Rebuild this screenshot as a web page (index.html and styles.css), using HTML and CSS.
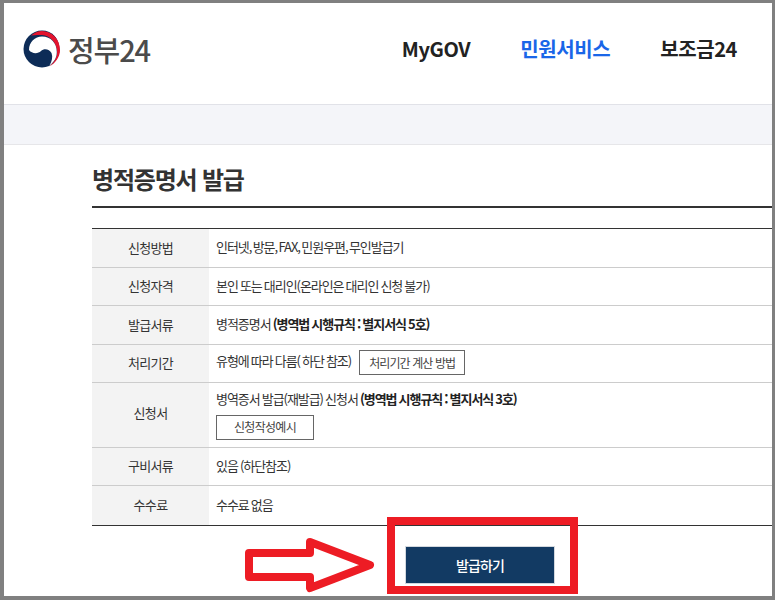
FILE: index.html
```html
<!DOCTYPE html>
<html lang="ko">
<head>
<meta charset="utf-8">
<title>병적증명서 발급</title>
<link rel="stylesheet" href="styles.css">
</head>
<body>
<div class="frame">
  <header class="top">
    <a class="logo">
      <svg class="mark" width="38" height="38" viewBox="0 0 38 38">
        <circle cx="19" cy="19" r="18.500" fill="#0d2c57"/>
        <path d="M30 4V.5H38V38H26V36.500C32 33 36.500 27 36.500 20C36.500 13 34 8 30 4Z" fill="#fff"/>
        <path d="M8 5.500C11 3 15 1 19 1C29 1 37 9.500 37 20C37 27 32.500 33 26.500 36.500C32 31.500 34.500 26 34 21C33.500 12.500 27 5.500 19 5C15 4.800 11 4.800 8 5.500Z" fill="#e3132d"/>
        <path d="M6 20C6 12 12 6.500 19 6.500C28 6.500 33.800 13 33.800 22C33.800 28 31 32 26.500 35.500C29 31 30 27 28.500 23C26.500 19 21 18 18 21C15 24 9 24 6 20Z" fill="#fff"/>
      </svg>
      <span class="logo-text">정부24</span>
    </a>
    <nav class="menu">
      <a class="menu-item">MyGOV</a>
      <a class="menu-item is-active">민원서비스</a>
      <a class="menu-item">보조금24</a>
    </nav>
  </header>
  <div class="band"></div>
  <main class="content">
    <h1 class="title">병적증명서 발급</h1>
    <table class="info">
      <tr class="r39"><th>신청방법</th><td class="tight">인터넷, 방문, FAX, 민원우편, 무인발급기</td></tr>
      <tr class="r38"><th>신청자격</th><td>본인 또는 대리인(온라인은 대리인 신청 불가)</td></tr>
      <tr class="r39"><th>발급서류</th><td>병적증명서 <b>(병역법 시행규칙 : 별지서식 5호)</b></td></tr>
      <tr class="r38"><th>처리기간</th><td>유형에 따라 다름( 하단 참조) <a class="btn btn-calc">처리기간 계산 방법</a></td></tr>
      <tr class="r65"><th class="th-tall">신청서</th><td><div class="line">병역증서 발급(재발급) 신청서 <b>(병역법 시행규칙 : 별지서식 3호)</b></div><a class="btn btn-ex">신청작성예시</a></td></tr>
      <tr class="r38"><th>구비서류</th><td>있음 (하단참조)</td></tr>
      <tr class="r39"><th>수수료</th><td>수수료 없음</td></tr>
    </table>
    <div class="actions"><a class="issue">발급하기</a></div>
  </main>
  <svg class="arrow" width="140" height="56" viewBox="0 0 140 56">
    <path d="M6 16H67V5L127 28L67 51V40H6Z" fill="#fff" stroke="#ed1c24" stroke-width="8" stroke-linejoin="round"/>
  </svg>
  <div class="mark-box"></div>
</div>
</body>
</html>
```
FILE: styles.css
```css
* { box-sizing: border-box; }
html, body { margin: 0; padding: 0; }
body {
  font-family: "Noto Sans CJK KR", "Noto Sans", sans-serif;
  color: #333;
  background: #fff;
}
.frame {
  position: relative;
  width: 775px;
  height: 600px;
  overflow: hidden;
  border-style: solid;
  border-color: #808080;
  border-width: 3px 3px 4px 4px;
  background: #fff;
}
.top {
  height: 101px;
  display: flex;
  align-items: center;
  justify-content: space-between;
  padding: 0 35px 10px 19px;
}
.logo { display: flex; align-items: center; gap: 7px; }
.mark { display: block; }
.logo-text {
  font-size: 29px;
  line-height: 38px;
  font-weight: 500;
  letter-spacing: -1.1px;
  color: #4b4b4b;
}
.menu { display: flex; gap: 50px; }
.menu-item {
  font-size: 20px;
  line-height: 30px;
  font-weight: 700;
  letter-spacing: -0.4px;
  color: #222;
}
.is-active { color: #1a66e8; }
.band {
  height: 41px;
  background: #f4f5f9;
  border-top: 1px solid #e1e2e8;
  border-bottom: 1px solid #e6e6e9;
}
.content { padding: 0 0 0 88px; }
.title {
  margin: 0;
  height: 63px;
  padding-top: 16px;
  font-size: 24px;
  line-height: 36px;
  font-weight: 700;
  letter-spacing: -1.2px;
  color: #333;
  border-bottom: 2px solid #333;
}
.info {
  width: 680px;
  margin-top: 20px;
  table-layout: fixed;
  border-collapse: separate;
  border-spacing: 0;
  border-top: 1px solid #333;
  border-bottom: 1px solid #333;
  font-size: 13px;
  letter-spacing: -0.65px;
}
.info th {
  width: 117px;
  padding: 0 0 2px;
  font-weight: 400;
  background: #f3f3f3;
  text-align: center;
  border-bottom: 1px solid #ccc;
}
.info th.th-tall { padding-bottom: 6px; }
.info td {
  padding: 0 0 2px 7px;
  border-bottom: 1px solid #ccc;
  line-height: 20px;
  letter-spacing: -1.05px;
  word-spacing: -0.5px;
}
.info td.tight { word-spacing: -1.2px; }
.info tr:last-child th, .info tr:last-child td { border-bottom: 0; }
.r38 { height: 38px; }
.r39 { height: 39px; }
.r65 { height: 65px; }
.info b { font-weight: 700; color: #222; }
.line { line-height: 20px; margin-bottom: 6px; }
.btn {
  display: inline-flex;
  align-items: center;
  justify-content: center;
  height: 25px;
  border: 1px solid #666;
  font-size: 12px;
  letter-spacing: -0.9px;
  word-spacing: 0;
  color: #444;
  background: #fff;
  vertical-align: middle;
}
.btn-calc { width: 106px; margin-left: 6px; }
.btn-ex { width: 98px; letter-spacing: -0.7px; }
.actions { display: flex; justify-content: center; padding: 20px 0 0 96px; width: 680px; }
.issue {
  display: flex;
  align-items: center;
  justify-content: center;
  width: 150px;
  height: 38px;
  background: #123a63;
  border: 1px solid #d3d8de;
  color: #fff;
  font-size: 14px;
  font-weight: 500;
  letter-spacing: -0.9px;
}
.mark-box {
  position: absolute;
  left: 383px;
  top: 514px;
  width: 191px;
  height: 77px;
  border: 8px solid #ed1c24;
}
.arrow {
  position: absolute;
  left: 239px;
  top: 534px;
}
```
